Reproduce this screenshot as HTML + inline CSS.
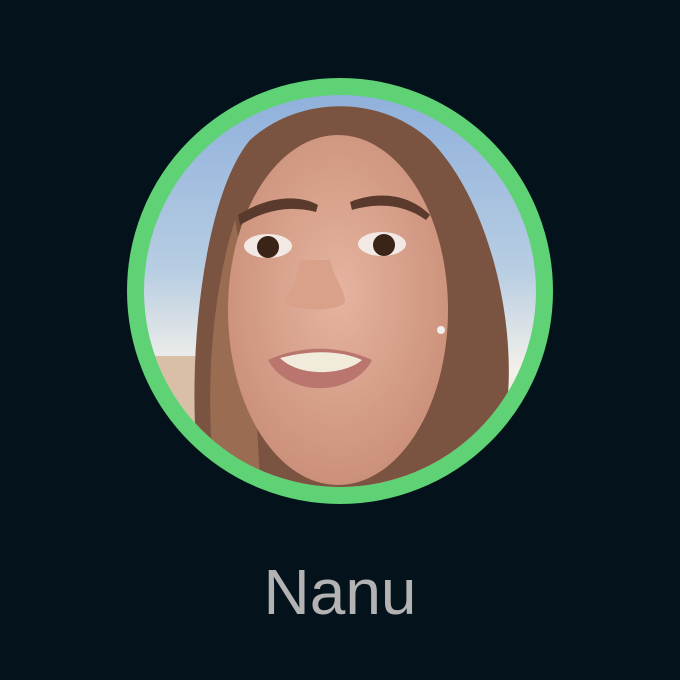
<!DOCTYPE html>
<html><head><meta charset="utf-8"><style>
html,body{margin:0;padding:0;background:#04131b;width:680px;height:680px;overflow:hidden}
.t{position:absolute;left:0;width:680px;top:552px;text-align:center;font:64px "Liberation Sans",sans-serif;color:#b3b3b3;line-height:80px}
</style></head><body>
<svg width="680" height="680" style="position:absolute;left:0;top:0">
<defs>
<clipPath id="c"><circle cx="340" cy="291" r="196"/></clipPath>
<linearGradient id="sky" x1="0" y1="0" x2="0" y2="1">
<stop offset="0" stop-color="#8fb0dc"/><stop offset="0.45" stop-color="#b7cde2"/><stop offset="0.7" stop-color="#f3f0ea"/><stop offset="1" stop-color="#e7d6c4"/></linearGradient>
<radialGradient id="skin" cx="0.5" cy="0.45" r="0.6"><stop offset="0" stop-color="#e5b4a0"/><stop offset="1" stop-color="#c98d76"/></radialGradient>
</defs>
<circle cx="340" cy="291" r="204" fill="none" stroke="#5ed274" stroke-width="18"/>
<g clip-path="url(#c)">
<rect x="140" y="90" width="400" height="400" fill="url(#sky)"/>
<rect x="140" y="356" width="100" height="140" fill="#d8bfa6"/>
<path d="M200 480 C185 380 200 200 250 140 C300 95 380 95 430 140 C490 200 520 330 505 420 C490 470 460 490 440 500 L200 500Z" fill="#7a5440"/>
<path d="M215 480 C205 400 210 300 235 220 L250 300 L260 480Z" fill="#9a6d52"/>
<ellipse cx="338" cy="310" rx="110" ry="175" fill="url(#skin)"/>
<path d="M238 215 C270 195 300 195 318 205 L316 212 C290 205 265 210 240 225Z" fill="#5a3a2c"/>
<path d="M350 202 C380 190 410 195 430 215 L426 220 C405 205 380 202 352 210Z" fill="#5a3a2c"/>
<ellipse cx="268" cy="246" rx="24" ry="12" fill="#f2e8e4"/><circle cx="268" cy="247" r="11" fill="#3a2418"/>
<ellipse cx="382" cy="244" rx="24" ry="12" fill="#f2e8e4"/><circle cx="384" cy="245" r="11" fill="#3a2418"/>
<path d="M300 260 C295 290 285 295 285 302 C290 312 340 312 345 302 C345 290 335 280 330 260Z" fill="#d9a08a"/>
<path d="M268 360 C300 345 340 345 372 360 C355 395 290 400 268 360Z" fill="#b9756e"/>
<path d="M280 358 C310 350 340 350 362 360 C345 375 300 378 280 358Z" fill="#f1ebdc"/>
<circle cx="441" cy="330" r="4" fill="#eee"/>
</g>
</svg>
<div class="t">Nanu</div>
</body></html>
